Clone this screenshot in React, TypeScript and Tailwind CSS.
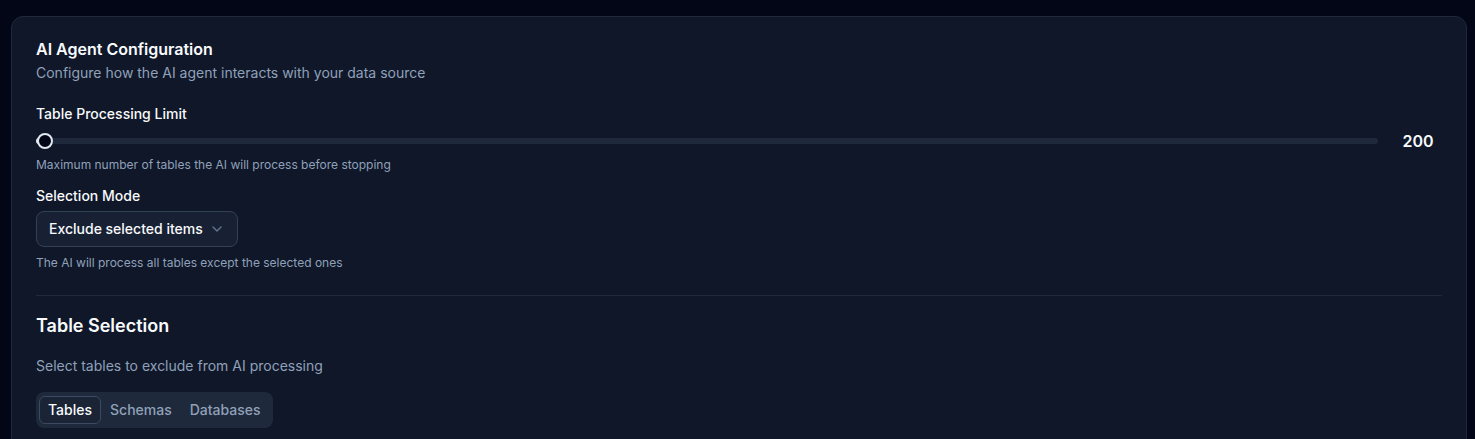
import { ChevronDown } from "lucide-react";

const TABS = ["Tables", "Schemas", "Databases"];

export default function App() {
  return (
    <div
      className="min-h-screen bg-[#020617] pt-4 pl-[11px] pr-2 text-slate-50"
      style={{ fontFamily: "Inter, 'Noto Sans', sans-serif" }}
    >
      <div className="rounded-xl border border-[#1e293b] bg-[#0f1729] p-6">
        <h3 className="text-base font-semibold leading-none text-slate-50">AI Agent Configuration</h3>
        <p className="mt-1.5 text-sm text-slate-400">Configure how the AI agent interacts with your data source</p>

        <div className="space-y-4 pt-6">
          {/* table limit */}
          <div>
            <label className="block text-sm font-medium leading-none text-slate-50">Table Processing Limit</label>
            <div className="mt-3 flex h-4 items-center gap-4">
              <div className="relative flex h-4 flex-1 items-center">
                <div className="h-1.5 w-full rounded-full bg-[#1e293b]" />
                <div className="absolute left-0 h-1.5 w-[3px] rounded-l-full bg-slate-200" />
                <div className="absolute left-[1px] top-0 size-4 rounded-full border-2 border-slate-200 bg-[#020617]" />
              </div>
              <span className="w-12 text-center text-base font-semibold leading-none text-slate-50">200</span>
            </div>
            <p className="mt-2 text-xs text-slate-400">Maximum number of tables the AI will process before stopping</p>
          </div>

          {/* selection mode */}
          <div>
            <label className="block text-sm font-medium leading-none text-slate-50">Selection Mode</label>
            <button className="mt-2 flex h-9 items-center gap-1.5 rounded-lg border border-[#334155] bg-[#182134] px-3 text-sm font-medium text-slate-50">
              Exclude selected items
              <ChevronDown size={16} className="text-slate-500" />
            </button>
            <p className="mt-2 text-xs text-slate-400">The AI will process all tables except the selected ones</p>
          </div>
        </div>

        <div className="mt-6 h-px bg-[#1e293b]" />

        <h4 className="mt-4 text-lg font-semibold text-slate-50">Table Selection</h4>
        <p className="mt-4 text-sm text-slate-400">Select tables to exclude from AI processing</p>

        <div className="mt-4 inline-flex h-9 items-center rounded-lg bg-[#1e293b] px-[3px]">
          {TABS.map((t, i) => (
            <button
              key={t}
              className={`h-7 rounded-md border px-2 text-sm font-medium ${
                i === 0 ? "border-[#3b4a60] bg-[#1a2435] text-slate-50" : "border-transparent text-slate-400"
              }`}
            >
              {t}
            </button>
          ))}
        </div>
      </div>
    </div>
  );
}
